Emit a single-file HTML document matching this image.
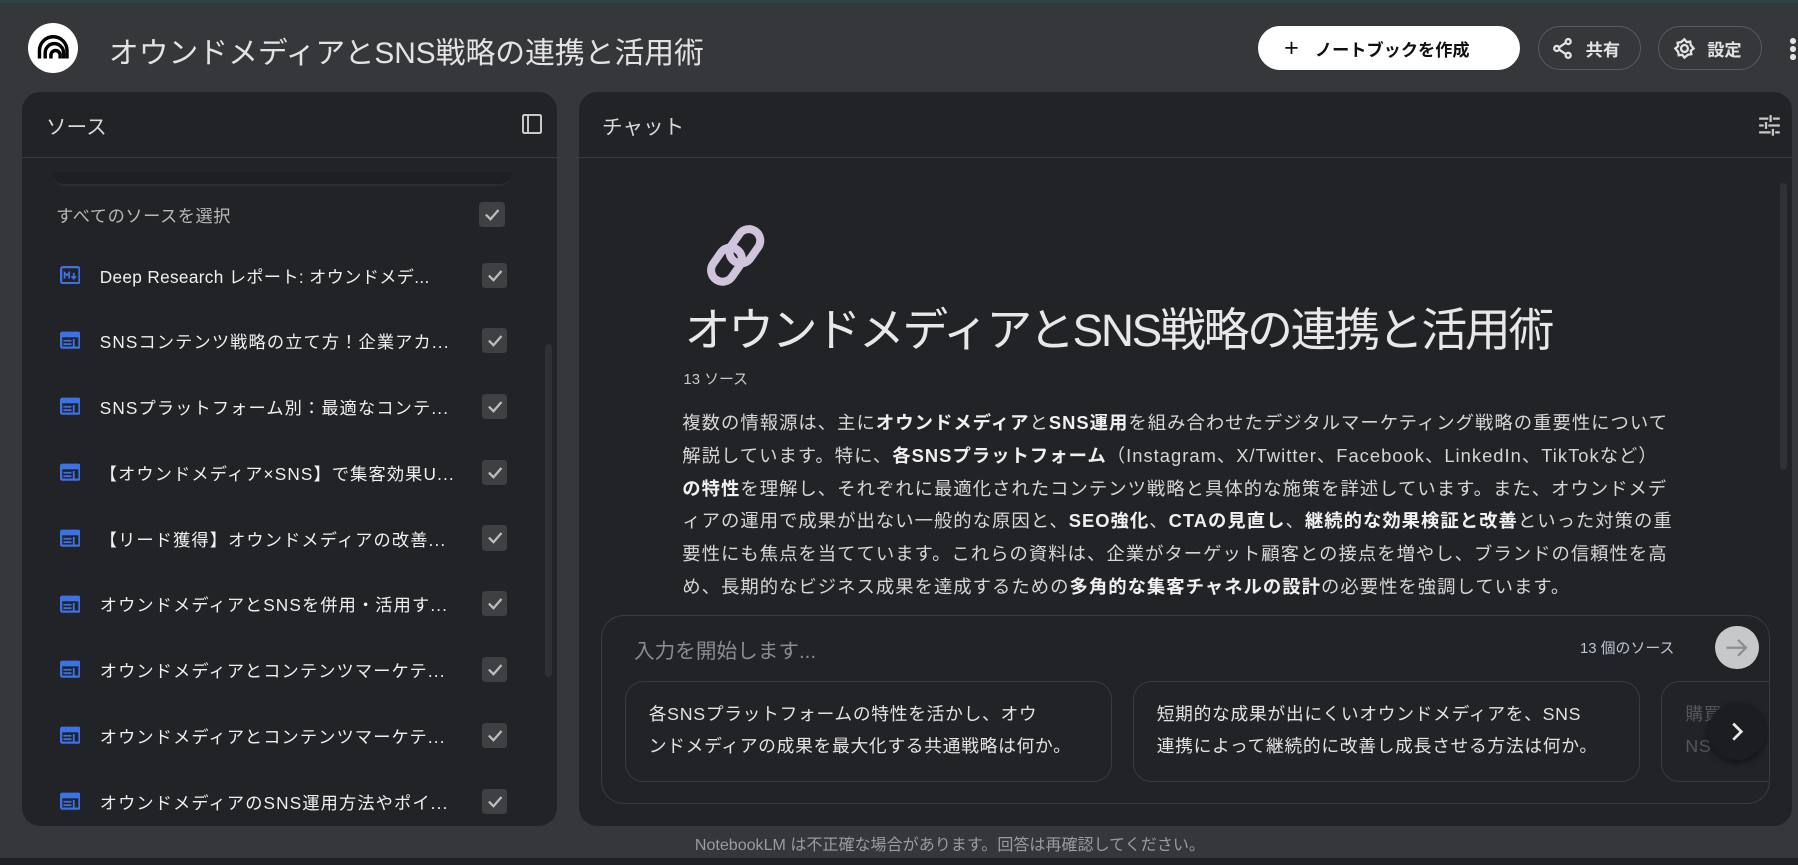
<!DOCTYPE html>
<html><head><meta charset="utf-8"><style>
html{zoom:1.14668}
*{box-sizing:border-box;margin:0;padding:0}
body{width:1568px;height:754px;background:#36373a;font-family:"Liberation Sans","Noto Sans CJK JP",sans-serif;color:#e3e3e3;position:relative;overflow:hidden}
.abs{position:absolute}
.topline{left:0;top:0;width:1568px;height:3px;background:#2b4548}
.btm{left:0;top:748px;width:1568px;height:6px;background:#1f2023}
.panel{background:#222327;border-radius:16px}
.hdr{border-bottom:1px solid #3a3b3e}
.pill{border:1px solid #5a5b5e;border-radius:20px;height:38px;display:flex;align-items:center;font-size:15px;font-weight:bold;color:#e3e3e3}
.cb{width:22px;height:22px;background:#3f4043;border-radius:3px}
.cb svg{display:block}
.row{left:52px;height:24px;display:flex;align-items:center;width:390px}
.row .t{margin-left:17px;font-size:15px;letter-spacing:1px;color:#f0f0f0;white-space:nowrap;width:313px;overflow:hidden}
.row .cb{margin-left:auto}
.para{left:595px;top:355px;font-size:16px;letter-spacing:0.9px;line-height:28.6px;color:#d6d6d6;white-space:nowrap}
.para b{color:#f0f0f0}
.card{border:1px solid #3a3b3e;border-radius:16px;font-size:15.5px;letter-spacing:0.6px;line-height:28px;color:#e3e3e3;padding:14px 20px;white-space:nowrap}
</style></head><body>
<div class="abs topline"></div>
<div class="abs" style="left:24px;top:20px;width:44px;height:44px;border-radius:50%;background:#fff">
<svg width="44" height="44" viewBox="0 0 44 44"><g fill="none" stroke="#000" stroke-width="3"><path d="M10 31V24a12 12 0 0 1 24 0v7"/><path d="M15 31v-5a8 8 0 0 1 16 0v5"/><path d="M20 31v-3a4 4 0 0 1 8 0v3"/></g></svg></div>
<div class="abs" style="left:95px;top:24px;font-size:26px;color:#e3e3e3;white-space:nowrap">オウンドメディアとSNS戦略の連携と活用術</div>
<div class="abs pill" style="left:1097px;top:23px;width:229px;background:#fff;border-color:#fff;color:#111;padding-left:22px"><span style="font-size:22px;font-weight:normal;margin-right:14px">+</span>ノートブックを作成</div>
<div class="abs pill" style="left:1341px;top:23px;width:90px;padding-left:11px"><svg width="20" height="20" viewBox="0 0 20 20" style="margin-right:10px"><g fill="none" stroke="#e3e3e3" stroke-width="2"><circle cx="15" cy="4" r="2.2"/><circle cx="5" cy="10" r="2.2"/><circle cx="15" cy="16" r="2.2"/><path d="M13 5 7 9M7 11l6 4"/></g></svg>共有</div>
<div class="abs pill" style="left:1446px;top:23px;width:91px;padding-left:12px"><svg width="20" height="20" viewBox="0 0 20 20" style="margin-right:10px"><g fill="none" stroke="#e3e3e3" stroke-width="2"><circle cx="10" cy="10" r="3"/><path d="M10 2l2 2.5 3-.5.5 3L18 10l-2.5 2 .5 3-3 .5L10 18l-2-2.5-3 .5-.5-3L2 10l2.5-2L4 5l3-.5z"/></g></svg>設定</div>
<div class="abs" style="left:1561px;top:33px;width:5px;height:5px;border-radius:50%;background:#e3e3e3;box-shadow:0 7px 0 #e3e3e3,0 14px 0 #e3e3e3"></div>

<div class="abs panel" style="left:19px;top:80px;width:467px;height:640px"></div>
<div class="abs hdr" style="left:19px;top:80px;width:467px;height:58px"></div>
<div class="abs" style="left:40px;top:96px;font-size:18px;color:#d8d8d8">ソース</div>
<div class="abs" style="left:455px;top:99px;width:18px;height:18px;border:2px solid #c8c8c8;border-radius:2px"><div style="position:absolute;left:3px;top:0;width:2px;height:14px;background:#c8c8c8"></div></div>
<div class="abs" style="left:46px;top:150px;width:400px;height:12px;border-bottom:2px solid #2c2d31;border-radius:0 0 10px 10px;background:#1e1f22"></div>
<div class="abs" style="left:475px;top:300px;width:6px;height:290px;border-radius:3px;background:#303135"></div>
<div class="abs" style="left:49px;top:176px;font-size:15px;letter-spacing:0.5px;color:#b8b8b8">すべてのソースを選択</div>
<div class="abs cb" style="left:418px;top:176px"><svg width="22" height="22"><path d="M6 11l4 4 7-8" fill="none" stroke="#bdbdbd" stroke-width="2"/></svg></div>

<div class="abs row" style="top:228px"><svg width="18" height="16"><rect x="1" y="1" width="16" height="14" rx="1.5" fill="none" stroke="#3b72e8" stroke-width="2"/><path d="M4 11V6l2 2 2-2v5M12 6v5M10 9l2 2 2-2" fill="none" stroke="#3b72e8" stroke-width="1.5"/></svg><span class="t" style="letter-spacing:0.3px">Deep Research レポート: オウンドメデ...</span><div class="cb"><svg width="22" height="22"><path d="M6 11l4 4 7-8" fill="none" stroke="#bdbdbd" stroke-width="2"/></svg></div></div>

<div id="rows"></div>
<script>
var t=["SNSコンテンツ戦略の立て方！企業アカ...","SNSプラットフォーム別：最適なコンテ...","【オウンドメディア×SNS】で集客効果U...","【リード獲得】オウンドメディアの改善...","オウンドメディアとSNSを併用・活用す...","オウンドメディアとコンテンツマーケテ...","オウンドメディアとコンテンツマーケテ...","オウンドメディアのSNS運用方法やポイ..."];
var h="";for(var i=0;i<t.length;i++){var y=285+i*57.4;h+='<div class="abs row" style="top:'+y+'px"><svg width="18" height="16"><rect x="1" y="1.5" width="16" height="13" rx="1" fill="none" stroke="#3b72e8" stroke-width="2"/><rect x="1" y="1.5" width="16" height="4" fill="#3b72e8"/><path d="M3 8.5h7M3 11.5h7M12 7v7" stroke="#3b72e8" stroke-width="1.6"/></svg><span class="t">'+t[i]+'</span><div class="cb"><svg width="22" height="22"><path d="M6 11l4 4 7-8" fill="none" stroke="#bdbdbd" stroke-width="2"/></svg></div></div>';}
document.getElementById("rows").outerHTML=h;
</script>

<div class="abs panel" style="left:505px;top:80px;width:1058px;height:640px"></div>
<div class="abs hdr" style="left:505px;top:80px;width:1058px;height:58px"></div>
<div class="abs" style="left:525px;top:96px;font-size:18px;color:#d8d8d8">チャット</div>
<svg class="abs" style="left:1533px;top:99px" width="20" height="20"><g stroke="#c8c8c8" stroke-width="2"><path d="M1 4h8M13 4h6M1 10h4M9 10h10M1 16h10M15 16h4M11 1v6M7 7v6M13 13v6"/></g></svg>
<div class="abs" style="left:1552px;top:160px;width:6px;height:250px;border-radius:3px;background:#303135"></div>
<svg class="abs" style="left:610px;top:193px" width="64" height="60" viewBox="0 0 64 60"><g fill="none" stroke="#cfc4dc" stroke-width="7" stroke-linecap="round"><rect x="30" y="6" width="20" height="32" rx="10" transform="rotate(35 40 22)"/><rect x="14" y="22" width="20" height="32" rx="10" transform="rotate(35 24 38)"/></g></svg>
<div class="abs" style="left:597px;top:256px;font-size:40px;letter-spacing:-2px;color:#e8e8e8;white-space:nowrap">オウンドメディアとSNS戦略の連携と活用術</div>
<div class="abs" style="left:596px;top:321px;font-size:13px;color:#c8c8c8">13 ソース</div>
<div class="abs para">複数の情報源は、主に<b>オウンドメディア</b>と<b>SNS運用</b>を組み合わせたデジタルマーケティング戦略の重要性について<br>解説しています。特に、<b>各SNSプラットフォーム</b>（Instagram、X/Twitter、Facebook、LinkedIn、TikTokなど）<br><b>の特性</b>を理解し、それぞれに最適化されたコンテンツ戦略と具体的な施策を詳述しています。また、オウンドメデ<br>ィアの運用で成果が出ない一般的な原因と、<b>SEO強化</b>、<b>CTAの見直し</b>、<b>継続的な効果検証と改善</b>といった対策の重<br>要性にも焦点を当てています。これらの資料は、企業がターゲット顧客との接点を増やし、ブランドの信頼性を高<br>め、長期的なビジネス成果を達成するための<b>多角的な集客チャネルの設計</b>の必要性を強調しています。</div>

<div class="abs" style="left:524px;top:536px;width:1020px;height:165px;border:1px solid #3a3b3e;border-radius:20px;background:#222327;overflow:hidden">
<div class="abs" style="left:28px;top:16px;font-size:18px;color:#8a8b8e">入力を開始します...</div>
<div class="abs" style="left:853px;top:19px;font-size:13px;color:#b8c4d4">13 個のソース</div>
<div class="abs" style="left:971px;top:9px;width:38px;height:38px;border-radius:50%;background:#c7c8ca"><svg width="38" height="38"><path d="M10 19h17M20 12l7 7-7 7" fill="none" stroke="#8d8e90" stroke-width="2"/></svg></div>
<div class="abs card" style="left:20px;top:57px;width:425px;height:88px">各SNSプラットフォームの特性を活かし、オウ<br>ンドメディアの成果を最大化する共通戦略は何か。</div>
<div class="abs card" style="left:463px;top:57px;width:442px;height:88px">短期的な成果が出にくいオウンドメディアを、SNS<br>連携によって継続的に改善し成長させる方法は何か。</div>
<div class="abs card" style="left:924px;top:57px;width:200px;height:88px;color:#55565a">購買<br>NS</div>
<div class="abs" style="left:965px;top:76px;width:50px;height:50px;border-radius:50%;background:#1c1d20;box-shadow:0 2px 6px rgba(0,0,0,.5)"><svg width="50" height="50"><path d="M22 18l7 7-7 7" fill="none" stroke="#e8e8e8" stroke-width="2.4"/></svg></div>
</div>
<div class="abs" style="left:606px;top:725px;font-size:14px;color:#9a9b9e;white-space:nowrap">NotebookLM は不正確な場合があります。回答は再確認してください。</div>
<div class="abs btm"></div>
</body></html>
